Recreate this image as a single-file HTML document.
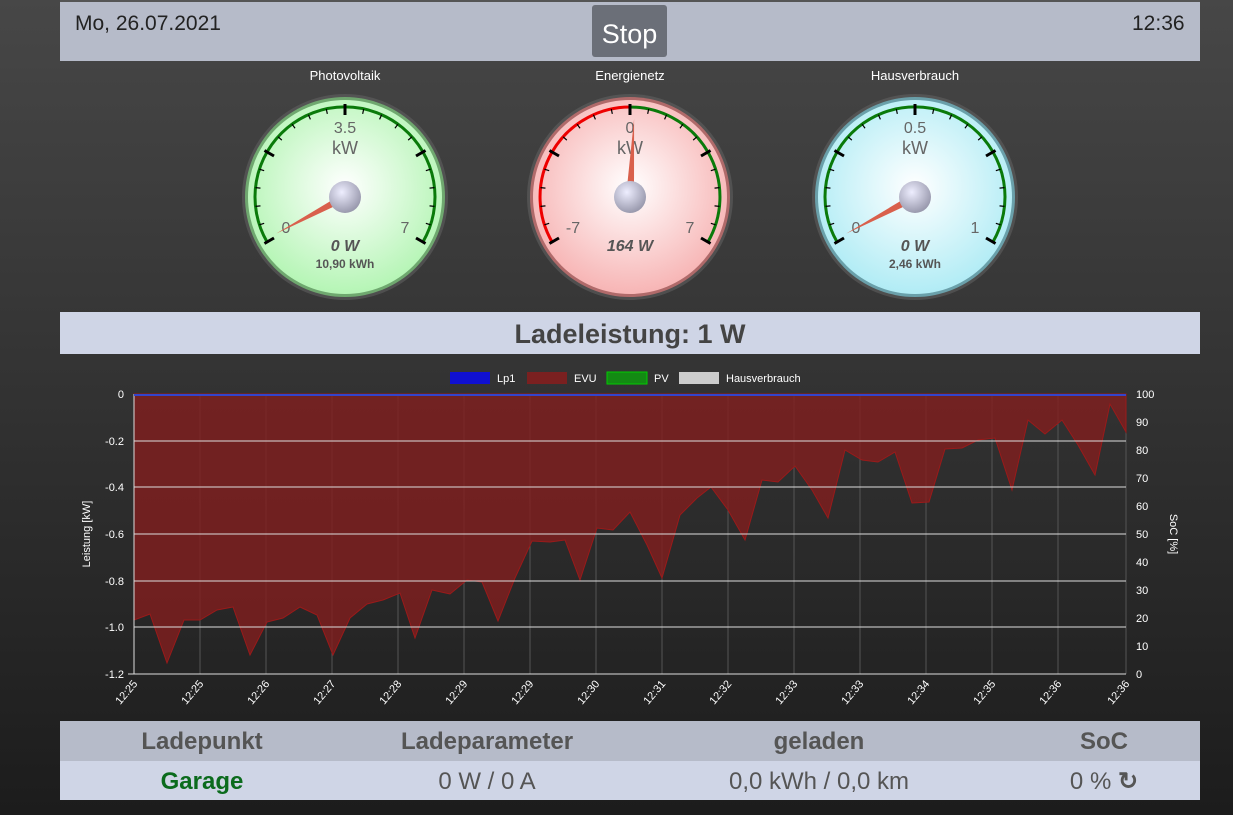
<!DOCTYPE html>
<html><head><meta charset="utf-8">
<style>
body{margin:0;width:1233px;height:815px;overflow:hidden;background:linear-gradient(#474747,#1c1c1c);font-family:"Liberation Sans",sans-serif;position:relative}
.bar{position:absolute;left:60px;width:1140px}
</style></head><body>
<div class="bar" style="top:0;height:61px;background:#b6bbc9;border-top:2px solid #555;box-sizing:border-box"></div>
<div style="position:absolute;left:75px;top:12px;font-size:21px;color:#222">Mo, 26.07.2021</div>
<div style="position:absolute;left:1132px;top:12px;font-size:21px;color:#222">12:36</div>
<div style="position:absolute;left:592px;top:5px;width:75px;height:52px;background:#6b6f78;border-radius:3px;color:#fff;font-size:27px;line-height:58px;text-align:center">Stop</div>
<div class="bar" style="top:312px;height:42px;background:#cfd5e6;text-align:center;font-size:27px;font-weight:bold;color:#444;line-height:44px">Ladeleistung: 1 W</div>
<div class="bar" style="top:721px;height:40px;background:#b6bbc9;font-size:24px;font-weight:bold;color:#555;line-height:42px">
<span style="position:absolute;left:142px;transform:translateX(-50%)">Ladepunkt</span>
<span style="position:absolute;left:427px;transform:translateX(-50%)">Ladeparameter</span>
<span style="position:absolute;left:759px;transform:translateX(-50%)">geladen</span>
<span style="position:absolute;left:1044px;transform:translateX(-50%)">SoC</span></div>
<div class="bar" style="top:761px;height:39px;background:#cfd5e6;font-size:24px;color:#555;line-height:42px">
<span style="position:absolute;left:142px;transform:translateX(-50%);font-weight:bold;color:#0b6b1d">Garage</span>
<span style="position:absolute;left:427px;transform:translateX(-50%)">0 W / 0 A</span>
<span style="position:absolute;left:759px;transform:translateX(-50%)">0,0 kWh / 0,0 km</span>
<span style="position:absolute;left:1044px;transform:translateX(-50%)">0 % <b>&#x21bb;</b></span></div>

<svg width="1233" height="815" style="position:absolute;left:0;top:0" font-family="Liberation Sans, sans-serif">
<defs>
<radialGradient id="gg" cx="50%" cy="45%" r="55%"><stop offset="0" stop-color="#fff"/><stop offset="1" stop-color="#b5f5b5"/></radialGradient>
<radialGradient id="gr" cx="50%" cy="45%" r="55%"><stop offset="0" stop-color="#fff"/><stop offset="1" stop-color="#f7b5b5"/></radialGradient>
<radialGradient id="gb" cx="50%" cy="45%" r="55%"><stop offset="0" stop-color="#fff"/><stop offset="1" stop-color="#b1ecf5"/></radialGradient>
<radialGradient id="kn" cx="40%" cy="35%" r="65%"><stop offset="0" stop-color="#eeeeff"/><stop offset="1" stop-color="#9a9aae"/></radialGradient>
<g id="ticks" stroke="#000">
<g stroke-width="3"><line x1="0" y1="-93" x2="0" y2="-82" transform="rotate(-120)"/><line x1="0" y1="-93" x2="0" y2="-82" transform="rotate(-60)"/><line x1="0" y1="-93" x2="0" y2="-82"/><line x1="0" y1="-93" x2="0" y2="-82" transform="rotate(60)"/><line x1="0" y1="-93" x2="0" y2="-82" transform="rotate(120)"/></g>
<g stroke-width="1.2"><line x1="0" y1="-90" x2="0" y2="-85" transform="rotate(-108)"/><line x1="0" y1="-90" x2="0" y2="-85" transform="rotate(-96)"/><line x1="0" y1="-90" x2="0" y2="-85" transform="rotate(-84)"/><line x1="0" y1="-90" x2="0" y2="-85" transform="rotate(-72)"/><line x1="0" y1="-90" x2="0" y2="-85" transform="rotate(-48)"/><line x1="0" y1="-90" x2="0" y2="-85" transform="rotate(-36)"/><line x1="0" y1="-90" x2="0" y2="-85" transform="rotate(-24)"/><line x1="0" y1="-90" x2="0" y2="-85" transform="rotate(-12)"/><line x1="0" y1="-90" x2="0" y2="-85" transform="rotate(12)"/><line x1="0" y1="-90" x2="0" y2="-85" transform="rotate(24)"/><line x1="0" y1="-90" x2="0" y2="-85" transform="rotate(36)"/><line x1="0" y1="-90" x2="0" y2="-85" transform="rotate(48)"/><line x1="0" y1="-90" x2="0" y2="-85" transform="rotate(72)"/><line x1="0" y1="-90" x2="0" y2="-85" transform="rotate(84)"/><line x1="0" y1="-90" x2="0" y2="-85" transform="rotate(96)"/><line x1="0" y1="-90" x2="0" y2="-85" transform="rotate(108)"/></g>
</g>
<polygon id="ndl" points="-4,0 0,-78 4,0" fill="#d9604c"/>
</defs>
<!-- gauges -->
<g font-size="13" fill="#fff" text-anchor="middle"><text x="345" y="80">Photovoltaik</text><text x="630" y="80">Energienetz</text><text x="915" y="80">Hausverbrauch</text></g>
<g transform="translate(345,197)">
<circle r="103" fill="#666" opacity=".5"/><circle r="100" fill="#6fa86f"/><circle r="97" fill="url(#gg)"/>
<path d="M-77.9 45 A90 90 0 1 1 77.9 45" fill="none" stroke="#0a7a0a" stroke-width="3"/>
<use href="#ticks"/>
<g fill="#666" text-anchor="middle" font-size="16"><text y="-64">3.5</text><text y="-43" font-size="18">kW</text><text x="-59" y="36">0</text><text x="60" y="36">7</text></g>
<g fill="#555" text-anchor="middle" font-weight="bold"><text y="54" font-size="16" font-style="italic">0 W</text><text y="71" font-size="12">10,90 kWh</text></g>
<use href="#ndl" transform="rotate(-118)"/>
<circle r="16" fill="url(#kn)"/></g>
<g transform="translate(630,197)">
<circle r="103" fill="#666" opacity=".5"/><circle r="100" fill="#b06a6a"/><circle r="97" fill="url(#gr)"/>
<path d="M-77.9 45 A90 90 0 0 1 0 -90" fill="none" stroke="#e00" stroke-width="3"/>
<path d="M0 -90 A90 90 0 0 1 77.9 45" fill="none" stroke="#0a7a0a" stroke-width="3"/>
<use href="#ticks"/>
<g fill="#666" text-anchor="middle" font-size="16"><text y="-64">0</text><text y="-43" font-size="18">kW</text><text x="-57" y="36">-7</text><text x="60" y="36">7</text></g>
<g fill="#555" text-anchor="middle" font-weight="bold"><text y="54" font-size="16" font-style="italic">164 W</text></g>
<use href="#ndl" transform="rotate(3)"/>
<circle r="16" fill="url(#kn)"/></g>
<g transform="translate(915,197)">
<circle r="103" fill="#666" opacity=".5"/><circle r="100" fill="#6aa0aa"/><circle r="97" fill="url(#gb)"/>
<path d="M-77.9 45 A90 90 0 1 1 77.9 45" fill="none" stroke="#0a7a0a" stroke-width="3"/>
<use href="#ticks"/>
<g fill="#666" text-anchor="middle" font-size="16"><text y="-64">0.5</text><text y="-43" font-size="18">kW</text><text x="-59" y="36">0</text><text x="60" y="36">1</text></g>
<g fill="#555" text-anchor="middle" font-weight="bold"><text y="54" font-size="16" font-style="italic">0 W</text><text y="71" font-size="12">2,46 kWh</text></g>
<use href="#ndl" transform="rotate(-118)"/>
<circle r="16" fill="url(#kn)"/></g>

<!-- chart -->
<g font-size="11" fill="#fff">
<rect x="450" y="372" width="40" height="12" fill="#1010d0"/><text x="497" y="382">Lp1</text>
<rect x="527" y="372" width="40" height="12" fill="#7a2020"/><text x="574" y="382">EVU</text>
<rect x="607" y="372" width="40" height="12" fill="#138a13" stroke="#0c0" stroke-width="1"/><text x="654" y="382">PV</text>
<rect x="679" y="372" width="40" height="12" fill="#ccc"/><text x="726" y="382">Hausverbrauch</text>
</g>
<g stroke="#555" stroke-width="1">
<line x1="200" y1="394" x2="200" y2="674"/><line x1="266" y1="394" x2="266" y2="674"/><line x1="332" y1="394" x2="332" y2="674"/><line x1="398" y1="394" x2="398" y2="674"/><line x1="464" y1="394" x2="464" y2="674"/><line x1="530" y1="394" x2="530" y2="674"/><line x1="596" y1="394" x2="596" y2="674"/><line x1="662" y1="394" x2="662" y2="674"/><line x1="728" y1="394" x2="728" y2="674"/><line x1="794" y1="394" x2="794" y2="674"/><line x1="860" y1="394" x2="860" y2="674"/><line x1="926" y1="394" x2="926" y2="674"/><line x1="992" y1="394" x2="992" y2="674"/><line x1="1058" y1="394" x2="1058" y2="674"/><line x1="1126" y1="394" x2="1126" y2="674"/>
</g>
<path d="M134 394 L134 620 L150 614 L167 663 L184 620 L200 620 L217 610 L233 607 L250 655 L267 622 L283 618 L300 607 L317 615 L333 655 L350 618 L367 604 L383 600 L400 593 L415 638 L432 590 L450 594 L467 580 L482 582 L498 621 L515 578 L532 541 L550 542 L565 540 L580 580 L597 528 L613 530 L630 512 L647 545 L662 578 L680 515 L697 498 L711 487 L728 510 L745 540 L762 480 L778 482 L795 466 L812 490 L828 518 L845 450 L862 460 L878 462 L895 452 L912 503 L929 502 L945 449 L962 448 L978 440 L995 438 L1012 490 L1028 420 L1045 434 L1062 420 L1078 445 L1095 475 L1110 404 L1126 432 L1126 394 Z" fill="rgba(130,30,30,.8)" stroke="#9a1a1a" stroke-width="1"/>
<g stroke="#ddd" stroke-width="1">
<line x1="134" y1="441" x2="1126" y2="441"/><line x1="134" y1="487" x2="1126" y2="487"/><line x1="134" y1="534" x2="1126" y2="534"/><line x1="134" y1="581" x2="1126" y2="581"/><line x1="134" y1="627" x2="1126" y2="627"/><line x1="128" y1="674" x2="1126" y2="674"/>
<line x1="134" y1="394" x2="134" y2="674"/></g>
<line x1="134" y1="395" x2="1126" y2="395" stroke="#3344cc" stroke-width="2"/>
<g font-size="11" fill="#fff" text-anchor="end">
<text x="124" y="398">0</text><text x="124" y="445">-0.2</text><text x="124" y="491">-0.4</text><text x="124" y="538">-0.6</text><text x="124" y="585">-0.8</text><text x="124" y="631">-1.0</text><text x="124" y="678">-1.2</text></g>
<g font-size="11" fill="#fff">
<text x="1136" y="398">100</text><text x="1136" y="426">90</text><text x="1136" y="454">80</text><text x="1136" y="482">70</text><text x="1136" y="510">60</text><text x="1136" y="538">50</text><text x="1136" y="566">40</text><text x="1136" y="594">30</text><text x="1136" y="622">20</text><text x="1136" y="650">10</text><text x="1136" y="678">0</text></g>
<text transform="translate(90,534) rotate(-90)" font-size="11" fill="#fff" text-anchor="middle">Leistung [kW]</text>
<text transform="translate(1170,534) rotate(90)" font-size="11" fill="#fff" text-anchor="middle">SoC [%]</text>
<g font-size="11" fill="#fff" text-anchor="end">
<text transform="translate(138,684) rotate(-50)">12:25</text><text transform="translate(204,684) rotate(-50)">12:25</text><text transform="translate(270,684) rotate(-50)">12:26</text><text transform="translate(336,684) rotate(-50)">12:27</text><text transform="translate(402,684) rotate(-50)">12:28</text><text transform="translate(468,684) rotate(-50)">12:29</text><text transform="translate(534,684) rotate(-50)">12:29</text><text transform="translate(600,684) rotate(-50)">12:30</text><text transform="translate(666,684) rotate(-50)">12:31</text><text transform="translate(732,684) rotate(-50)">12:32</text><text transform="translate(798,684) rotate(-50)">12:33</text><text transform="translate(864,684) rotate(-50)">12:33</text><text transform="translate(930,684) rotate(-50)">12:34</text><text transform="translate(996,684) rotate(-50)">12:35</text><text transform="translate(1062,684) rotate(-50)">12:36</text><text transform="translate(1130,684) rotate(-50)">12:36</text></g>
</svg>
</body></html>
